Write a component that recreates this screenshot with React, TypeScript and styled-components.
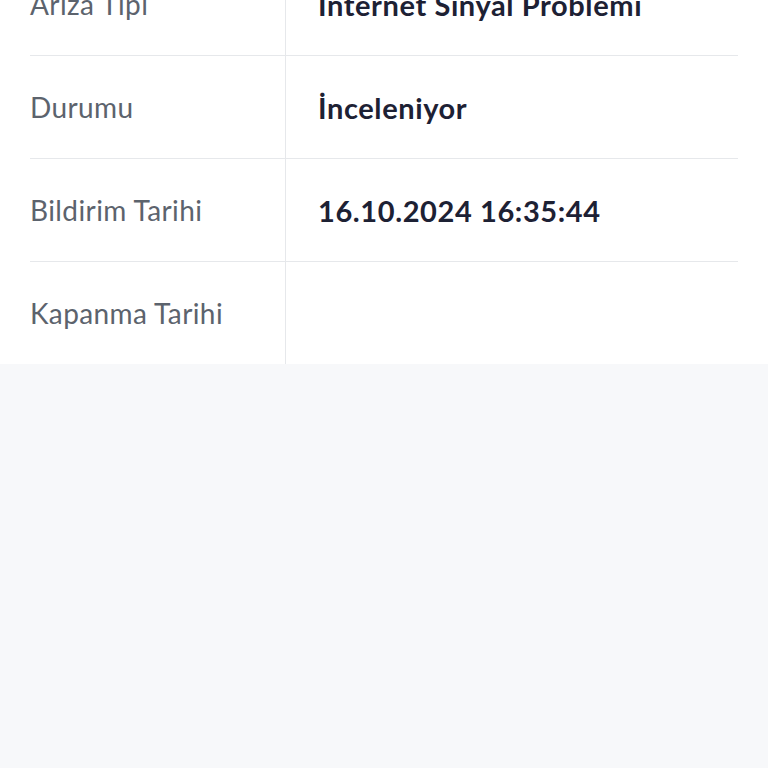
import * as React from 'react'
import styled, { createGlobalStyle } from 'styled-components'

const GlobalStyle = createGlobalStyle`
  html, body {
    margin: 0;
    padding: 0;
    background: #f7f8fa;
  }
  body {
    font-family: Lato, "Noto Sans", sans-serif;
    overflow: hidden;
  }
`

interface Detail {
  label: string
  value: string
}

const details: Detail[] = [
  { label: 'Arıza Tipi', value: 'İnternet Sinyal Problemi' },
  { label: 'Durumu', value: 'İnceleniyor' },
  { label: 'Bildirim Tarihi', value: '16.10.2024 16:35:44' },
  { label: 'Kapanma Tarihi', value: '' },
]

const App: React.FC = () => (
  <>
    <GlobalStyle />
    <Page>
      <Card>
        {details.map((d) => (
          <Row key={d.label}>
            <Label>{d.label}</Label>
            <Value>{d.value}</Value>
          </Row>
        ))}
      </Card>
    </Page>
  </>
)

const Page = styled.div`
  min-height: 768px;
  background: #f7f8fa;
`

// page is scrolled a bit: first row is partly hidden
const Card = styled.div`
  margin-top: -47px;
  background: #ffffff;
  padding: 0 30px;
`

const Row = styled.div`
  display: grid;
  grid-template-columns: 256px 1fr;
  height: 103px;
  border-bottom: 1px solid #e6e8eb;
  box-sizing: border-box;

  &:last-child {
    border-bottom: none;
    height: 102px;
  }
`

const Label = styled.div`
  display: flex;
  align-items: center;
  border-right: 1.5px solid #e6e8eb;
  color: #5c636d;
  font-size: 28px;
  font-weight: 400;
  letter-spacing: 0.4px;
`

const Value = styled.div`
  display: flex;
  align-items: center;
  padding-left: 32px;
  color: #1d2134;
  font-size: 29px;
  font-weight: 700;
  letter-spacing: 0.6px;
`

export default App
